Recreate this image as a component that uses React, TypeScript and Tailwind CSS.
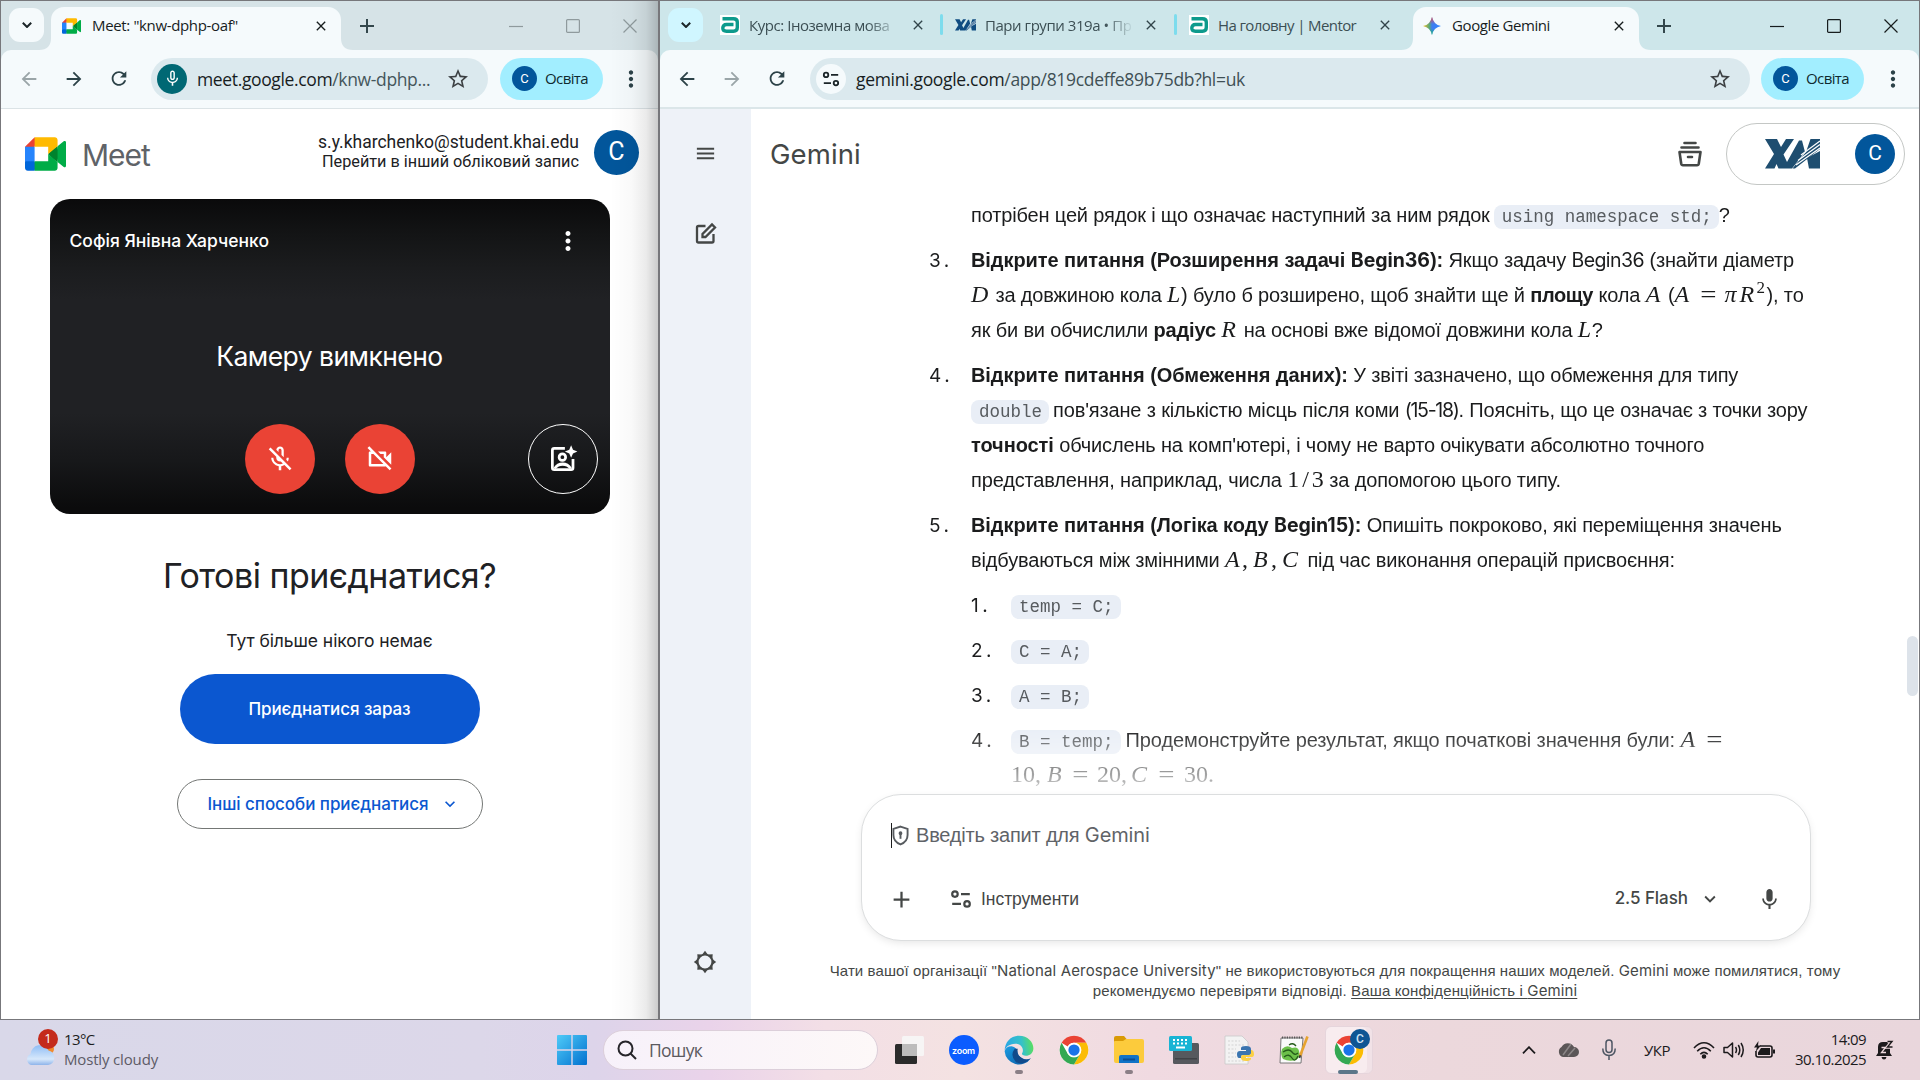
import type { ReactNode } from "react";
import {
  MdAdd,
  MdArrowBack,
  MdArrowForward,
  MdClose,
  MdKeyboardArrowDown,
  MdMenu,
  MdMic,
  MdMicNone,
  MdMoreVert,
  MdOutlineMicOff,
  MdOutlineVideocamOff,
  MdRefresh,
  MdStarBorder,
} from "react-icons/md";

/* ---------- logos and icons ---------- */

function MeetLogo({ className }: { className: string }) {
  return (
    <svg viewBox="0 0 87.5 72" className={className}>
      <path fill="#00832d" d="M49.5 36l8.53 9.75 11.47 7.33 2-17.02-2-16.64-11.69 6.44z" />
      <path fill="#0066da" d="M0 51.5V66c0 3.315 2.685 6 6 6h14.5l3-10.96-3-9.54-9.95-3z" />
      <path fill="#e94235" d="M20.5 0L0 20.5l10.55 3 9.95-3 2.95-9.41z" />
      <path fill="#2684fc" d="M20.5 20.5H0v31h20.5z" />
      <path
        fill="#00ac47"
        d="M82.6 8.68L69.5 19.42v33.66l13.16 10.79c1.97 1.54 4.85.135 4.85-2.37V11c0-2.535-2.945-3.925-4.91-2.32zM49.5 36v15.5h-29V72h43c3.315 0 6-2.685 6-6V53.08z"
      />
      <path fill="#ffba00" d="M63.5 0h-43v20.5h29V36l20-16.57V6c0-3.315-2.685-6-6-6z" />
    </svg>
  );
}

function XaiLogo({ className, color }: { className: string; color: string }) {
  return (
    <svg viewBox="0 0 55 30" className={className} fill={color}>
      <path d="M0 0H12L16 8 21 0H29L18.500 15.500 22 23 34 1.500H37L40 13 27 29.500H13.500L11.500 25 9.500 29.500H0L9 15z" />
      <path d="M55 12V29.500H44L42 19z" />
      <path d="M45.500 0H55V10L30 29.500H27.500L41 13z" />
      <path d="M55 2 36 16M55 5.500 33 21.500M55 9 31 26" stroke="#fff" strokeWidth="1.300" fill="none" />
    </svg>
  );
}

function MentorLogo() {
  return (
    <div className="flex h-5 w-5 shrink-0 items-center justify-center bg-white">
      <svg viewBox="0 0 18 16" className="h-4 w-[18px]" fill="none" stroke="#0d9a8c" strokeWidth="3.400">
        <path d="M1.500 1.800H12.500Q16.300 1.800 16.300 5V10.500Q16.300 14.200 12.500 14.200H5.500Q1.800 14.200 1.800 11Q1.800 7.500 5.500 7.500H12.500" />
      </svg>
    </div>
  );
}

function GeminiSpark() {
  return (
    <svg viewBox="0 0 18 18" className="h-[18px] w-[18px] shrink-0">
      <defs>
        <linearGradient id="sparkH" x1="0" x2="1">
          <stop offset="0" stopColor="#f9bf1c" />
          <stop offset=".35" stopColor="#58a878" />
          <stop offset=".5" stopColor="#3f7df0" />
          <stop offset="1" stopColor="#3186ff" />
        </linearGradient>
        <linearGradient id="sparkV" x1="0" x2="0" y1="0" y2="1">
          <stop offset="0" stopColor="#f0453a" />
          <stop offset=".4" stopColor="#e0506a" stopOpacity="0" />
          <stop offset=".65" stopColor="#0ebc5f" stopOpacity="0" />
          <stop offset="1" stopColor="#0ebc5f" />
        </linearGradient>
      </defs>
      <path fill="url(#sparkH)" d="M9 0Q10.500 7.500 18 9 10.500 10.500 9 18 7.500 10.500 0 9 7.500 7.500 9 0z" />
      <path fill="url(#sparkV)" d="M9 0Q10.500 7.500 18 9 10.500 10.500 9 18 7.500 10.500 0 9 7.500 7.500 9 0z" />
    </svg>
  );
}

function TuneIcon({ className }: { className: string }) {
  return (
    <svg viewBox="0 0 20 20" className={className} fill="none" stroke="currentColor" strokeWidth="2">
      <circle cx="4.500" cy="5.500" r="2.500" />
      <path d="M10 5.500H18M2 14.500H10" />
      <circle cx="15.500" cy="14.500" r="2.500" />
    </svg>
  );
}

function WindowControls({ className }: { className: string }) {
  return (
    <div className={`ml-auto flex ${className}`}>
      <div className="flex w-[57px] justify-center">
        <svg viewBox="0 0 14 14" className="h-3.5 w-3.5" stroke="currentColor">
          <path d="M0 7.500H14" strokeWidth="1.200" />
        </svg>
      </div>
      <div className="flex w-[57px] justify-center">
        <svg viewBox="0 0 14 14" className="h-3.5 w-3.5" fill="none" stroke="currentColor">
          <rect x=".6" y=".6" width="12.800" height="12.800" rx="1" strokeWidth="1.200" />
        </svg>
      </div>
      <div className="flex w-[57px] justify-center">
        <svg viewBox="0 0 14 14" className="h-3.5 w-3.5" fill="none" stroke="currentColor">
          <path d="M.5.5 13.500 13.500M13.500.5.5 13.500" strokeWidth="1.200" />
        </svg>
      </div>
    </div>
  );
}

/* ---------- browser chrome ---------- */

function TabSearch({ className }: { className: string }) {
  return (
    <div className={`ml-2 mt-[7px] flex h-[34px] w-[35px] shrink-0 items-center justify-center rounded-[11px] ${className}`}>
      <svg viewBox="0 0 10 6" className="h-1.5 w-2.5" fill="none" stroke="#1b2528" strokeWidth="2">
        <path d="M.8.8 5 5 9.200.8" />
      </svg>
    </div>
  );
}

function ActiveTab({ className, icon, title, titleClass }: { className: string; icon: ReactNode; title: string; titleClass: string }) {
  return (
    <div className={`relative mt-1.5 flex h-[43px] shrink-0 items-center rounded-t-[13px] bg-[#f5fafc] pb-1.5 pr-3 ${className}`}>
      <svg viewBox="0 0 12 12" className="absolute -left-3 bottom-0 h-3 w-3" fill="#f5fafc">
        <path d="M12 0V12H0Q12 12 12 0z" />
      </svg>
      <svg viewBox="0 0 12 12" className="absolute -right-3 bottom-0 h-3 w-3" fill="#f5fafc">
        <path d="M0 0V12H12Q0 12 0 0z" />
      </svg>
      {icon}
      <span className={`whitespace-nowrap text-[15px] text-[#171d1e] ${titleClass}`}>{title}</span>
      <MdClose className="ml-auto h-4 w-4 shrink-0 text-[#171d1e]" />
    </div>
  );
}

function IdleTab({ icon, title, className, fade = "" }: { icon: ReactNode; title: string; className: string; fade?: string }) {
  return (
    <div className={`flex h-[49px] shrink-0 items-center pb-px ${className}`}>
      {icon}
      <span className={`ml-[9px] whitespace-nowrap text-[15px] text-[#3c4f54] ${fade}`}>{title}</span>
      <MdClose className="ml-auto h-4 w-4 shrink-0 text-[#31444a]" />
    </div>
  );
}

function ProfilePill() {
  return (
    <div className="flex h-[42px] w-[103px] shrink-0 items-center rounded-full bg-[#a2eeff] pl-3">
      <div className="flex h-[25px] w-[25px] items-center justify-center rounded-full bg-[#02569b] font-['Roboto'] text-[13px] text-white">
        C
      </div>
      <span className="ml-2 text-[15px] tracking-[-0.6px] text-[#0f2a30]">Освіта</span>
    </div>
  );
}

/* ---------- Meet window ---------- */

function MeetWindow() {
  return (
    <div className="relative flex h-[1020px] w-[660px] shrink-0 flex-col border-b border-l border-r-2 border-t border-[#77777b] bg-white">
      <div className="flex h-[49px] shrink-0 bg-[#d6e3e7] font-['Open_Sans']">
        <TabSearch className="bg-[#f5fafc]" />
        <ActiveTab
          className="ml-[7px] w-[290px] pl-[11px]"
          icon={<MeetLogo className="h-4 w-[19px] shrink-0" />}
          title={'Meet: "knw-dphp-oaf"'}
          titleClass="ml-[11px] tracking-[-0.35px]"
        />
        <div className="ml-[14px] flex items-center">
          <MdAdd className="h-6 w-6 text-[#33474c]" />
        </div>
        <WindowControls className="items-center text-[#8f9a9d]" />
      </div>
      <div className="bg-[#d6e3e7]">
        <div className="flex h-[59px] items-center rounded-t-[10px] border-b border-[#dbe3e6] bg-[#f5fafc] pb-px pl-[17px] font-['Open_Sans'] text-[#2c4248]">
          <MdArrowBack className="h-[22px] w-[22px] shrink-0 text-[#9aa5a8]" />
          <MdArrowForward className="ml-[23px] h-[22px] w-[22px] shrink-0" />
          <MdRefresh className="ml-[23px] h-[23px] w-[22px] shrink-0" />
          <div className="ml-[21px] flex h-[42px] w-[337px] shrink-0 items-center rounded-full bg-[#dbe9ee] pl-1.5">
            <div className="flex h-[30px] w-[30px] shrink-0 items-center justify-center rounded-full bg-[#006874] text-white">
              <MdMicNone className="h-[19px] w-[19px]" />
            </div>
            <span className="ml-[10px] whitespace-nowrap pt-0.5 text-[17.5px] tracking-[-0.36px] text-[#171d1e]">
              meet.google.com<span className="text-[#45565b]">/knw-dphp...</span>
            </span>
            <MdStarBorder className="ml-auto mr-[18px] h-6 w-6 shrink-0 text-[#3c4043]" />
          </div>
          <div className="ml-3">
            <ProfilePill />
          </div>
          <MdMoreVert className="ml-[15px] h-[26px] w-[26px] shrink-0" />
        </div>
      </div>

      <div className="flex h-[90px] shrink-0 items-center pb-1 pl-6 pr-[19px]">
        <MeetLogo className="mt-1 h-[34px] w-[41px]" />
        <span className="ml-4 mt-[7px] font-['Inter'] text-[30px] tracking-[-1px] text-[#5f6368]">Meet</span>
        <div className="ml-auto text-right font-['Roboto'] text-[#202124]">
          <div className="text-[17.5px] leading-5">s.y.kharchenko@student.khai.edu</div>
          <div className="text-[16.25px] leading-5">Перейти в інший обліковий запис</div>
        </div>
        <div className="ml-[15px] flex h-[45px] w-[45px] items-center justify-center rounded-full bg-[#02569b] font-['Roboto'] text-[25px] text-white">
          C
        </div>
      </div>

      <div className="mx-auto flex h-[315px] w-[560px] shrink-0 flex-col rounded-[20px] bg-[linear-gradient(to_bottom,#0a0a0b_0%,#131415_11%,#1b1c1e_22%,#202124_32%,#202124_68%,#17181a_83%,#0b0b0c_98%)] text-white">
        <div className="flex h-[84px] items-center justify-between pl-5 pr-[27px]">
          <span className="pt-px font-['Inter'] text-[17.5px] font-medium">Софія Янівна Харченко</span>
          <MdMoreVert className="h-[30px] w-[30px]" />
        </div>
        <div className="flex h-[146px] items-center justify-center pt-px font-['Inter'] text-[26.5px] tracking-[-0.55px]">
          Камеру вимкнено
        </div>
        <div className="mt-[-5px] flex h-[70px]">
          <div className="ml-[195px] flex h-[70px] w-[70px] items-center justify-center rounded-full bg-[#ea4335]">
            <MdOutlineMicOff className="h-[30px] w-[30px]" />
          </div>
          <div className="ml-[30px] flex h-[70px] w-[70px] items-center justify-center rounded-full bg-[#ea4335]">
            <MdOutlineVideocamOff className="h-[30px] w-[30px]" />
          </div>
          <div className="ml-[113px] flex h-[70px] w-[70px] items-center justify-center rounded-full border border-white">
            <svg viewBox="0 0 24 24" className="h-[30px] w-[30px]" fill="none" stroke="white" strokeWidth="2.200">
              <path d="M13.500 3.500H5Q3.500 3.500 3.500 5V19Q3.500 20.500 5 20.500H18.500Q20 20.500 20 19V12" />
              <circle cx="11.500" cy="10.500" r="2.600" />
              <path fill="white" stroke="none" d="M4.500 19Q7 14.800 11.700 14.800T19 19L17.500 20Q15 17.300 11.700 17.300T6 20z" />
              <path fill="white" stroke="none" d="M18.500 1 20 4.500 23.500 6 20 7.500 18.500 11 17 7.500 13.500 6 17 4.500z" />
            </svg>
          </div>
        </div>
      </div>

      <div className="flex flex-col items-center font-['Inter'] text-[#202124]">
        <div className="mt-10 h-[44px] whitespace-nowrap text-[34px] leading-[44px] tracking-[-0.52px]">Готові приєднатися?</div>
        <div className="mt-[31px] h-6 text-[17.5px] leading-6 tracking-[-0.07px]">Тут більше нікого немає</div>
        <div className="mt-[21px] flex h-[70px] w-[300px] items-center justify-center rounded-full bg-[#0b57d0] pt-0.5 text-[17px] font-medium tracking-[-0.08px] text-white">
          Приєднатися зараз
        </div>
        <div className="mt-[35px] flex h-[50px] w-[306px] items-center rounded-full border border-[#747775] pl-[30px] text-[17px] font-medium tracking-[-0.06px] text-[#0b57d0]">
          <span className="pt-0.5">Інші способи приєднатися</span>
          <MdKeyboardArrowDown className="ml-[11px] h-5 w-5" />
        </div>
      </div>

      <div className="pointer-events-none absolute bottom-0 right-0 top-0 w-12 bg-[linear-gradient(to_right,transparent,rgba(0,0,0,0.025)_45%,rgba(0,0,0,0.08)_75%,rgba(0,0,0,0.2))]" />
    </div>
  );
}

/* ---------- Gemini window ---------- */

function Code({ children, className = "" }: { children: ReactNode; className?: string }) {
  return (
    <code
      className={`inline-block h-6 rounded-lg bg-[#e9eef6] pl-2 pr-[7px] font-['Liberation_Mono'] text-[17.5px] leading-6 tracking-normal text-[#575b5f] ${className}`}
    >
      {children}
    </code>
  );
}

function M({ children, className = "" }: { children: ReactNode; className?: string }) {
  return (
    <span className={`inline-block font-['Liberation_Serif'] text-[24px] leading-none tracking-normal ${className}`}>
      {children}
    </span>
  );
}

function Eq({ className = "mx-[7px]" }: { className?: string }) {
  return (
    <span className={`inline-block w-[17px] scale-x-120 text-center font-['Liberation_Serif'] text-[24px] leading-none tracking-normal ${className}`}>
      =
    </span>
  );
}

function Latin({ children, className = "tracking-[-0.55px]" }: { children: ReactNode; className?: string }) {
  return <span className={`font-['Inter'] text-[19.5px] leading-none ${className}`}>{children}</span>;
}

function Bold({ children }: { children: ReactNode }) {
  return <b className="tracking-[-0.07px]">{children}</b>;
}

function Line({ children }: { children: ReactNode }) {
  return <div className="h-[35px] whitespace-pre">{children}</div>;
}

function Item({ n, children, className = "w-[42px]" }: { n: string; children: ReactNode; className?: string }) {
  return (
    <li className="flex">
      <span className={`shrink-0 font-['Inter'] text-[19px] tracking-[3.5px] ${className}`}>{n}.</span>
      <div>{children}</div>
    </li>
  );
}

function Answer() {
  return (
    <div className="h-[596px] shrink-0 overflow-hidden pl-[178px] font-['Liberation_Sans'] text-[20px] leading-[35px] tracking-[-0.155px] text-[#1b1c1d] [mask-image:linear-gradient(to_bottom,black_528px,transparent_610px)]">
      <ol className="flex flex-col gap-2.5">
        <li className="pl-[42px]">
          <Line>
            потрібен цей рядок і що означає наступний за ним рядок<Code className="ml-1">using namespace std;</Code>?
          </Line>
        </li>
        <Item n="3">
          <Line>
            <Bold>
              Відкрите питання (Розширення задачі <Latin className="tracking-[-0.05px]">Begin36</Latin>):
            </Bold>{" "}
            Якщо задачу <Latin>Begin36</Latin> (знайти діаметр
          </Line>
          <Line>
            <M className="w-[19px] italic">D</M>
            {" за довжиною кола "}
            <M className="w-[14px] italic">L</M>
            {") було б розширено, щоб знайти ще й "}
            <b className="tracking-[-0.4px]">площу</b>
            {" кола "}
            <M className="w-[17px] italic">A</M>
            {" ("}
            <M className="w-[17px] italic">A</M>
            <Eq className="mx-2" />
            <M className="w-[15px] italic">π</M>
            <M className="w-[17px] italic">R</M>
            <span className="inline-block w-[10px] align-[9px] font-['Liberation_Serif'] text-[17px] leading-none">2</span>
            {"), то"}
          </Line>
          <Line>
            {"як би ви обчислили "}
            <b>радіус</b> <M className="w-[17px] italic">R</M>
            {" на основі вже відомої довжини кола "}
            <M className="w-[14px] italic">L</M>?
          </Line>
        </Item>
        <Item n="4">
          <Line>
            <Bold>Відкрите питання (Обмеження даних):</Bold> У звіті зазначено, що обмеження для типу
          </Line>
          <Line>
            <Code className="mr-1">double</Code>
            {"пов'язане з кількістю місць після коми "}
            <Latin className="tracking-[-1.3px]">(15-18)</Latin>
            {". Поясніть, що це означає з точки зору"}
          </Line>
          <Line>
            <Bold>точності</Bold>
            {" обчислень на комп'ютері, і чому не варто очікувати абсолютно точного"}
          </Line>
          <Line>
            {"представлення, наприклад, числа "}
            <M>
              1<span className="mx-[3px]">/</span>3
            </M>
            {" за допомогою цього типу."}
          </Line>
        </Item>
        <Item n="5">
          <Line>
            <Bold>
              Відкрите питання (Логіка коду <Latin className="tracking-[-0.05px]">Begin15</Latin>):
            </Bold>{" "}
            <span className="tracking-[-0.13px]">Опишіть покроково, які переміщення значень</span>
          </Line>
          <Line>
            {"відбуваються між змінними "}
            <M className="w-[77px] whitespace-pre">
              <i className="inline-block w-[17px]">A</i>
              <span className="inline-block w-[11px]">,</span>
              <i className="inline-block w-[18px]">B</i>
              <span className="inline-block w-[11px]">,</span>
              <i>C</i>
            </M>
            {" під час виконання операцій присвоєння:"}
          </Line>
          <ol className="mt-2.5 flex flex-col gap-2.5">
            <Item n="1" className="w-[40px]">
              <Line>
                <Code>temp = C;</Code>
              </Line>
            </Item>
            <Item n="2" className="w-[40px]">
              <Line>
                <Code>C = A;</Code>
              </Line>
            </Item>
            <Item n="3" className="w-[40px]">
              <Line>
                <Code>A = B;</Code>
              </Line>
            </Item>
            <Item n="4" className="w-[40px]">
              <Line>
                <Code className="mr-[5px]">B = temp;</Code>
                <span className="tracking-[-0.1px]">{"Продемонструйте результат, якщо початкові значення були: "}</span>
                <M className="w-[17px] italic">A</M>
                <Eq className="ml-2" />
              </Line>
              <Line>
                <M className="w-[36px]">10,</M>
                <M className="w-[17px] italic">B</M>
                <Eq className="mx-[8px]" />
                <M className="w-[34px]">20,</M>
                <M className="w-[18px] italic">C</M>
                <Eq className="mx-[9px]" />
                <M>30.</M>
              </Line>
            </Item>
          </ol>
        </Item>
      </ol>
    </div>
  );
}

function GeminiWindow() {
  return (
    <div className="flex h-[1020px] w-[1260px] shrink-0 flex-col border-b border-r border-t border-[#77777b] bg-white">
      <div className="flex h-[49px] shrink-0 bg-[#cde6ea] font-['Open_Sans']">
        <TabSearch className="bg-[#d0f6ff]" />
        <IdleTab
          className="ml-[17px] w-[206px] tracking-[-0.45px]"
          icon={<MentorLogo />}
          title="Курс: Іноземна мова"
          fade="[mask-image:linear-gradient(to_right,black_84%,rgba(0,0,0,0.35))]"
        />
        <div className="ml-3.5 mt-[13px] h-[21px] w-[3px] rounded bg-[#7ddced]" />
        <IdleTab
          className="ml-3 w-[204px] tracking-[-0.45px]"
          icon={<XaiLogo className="h-3 w-[21px] shrink-0" color="#0f4c81" />}
          title="Пари групи 319а • Пр"
          fade="[mask-image:linear-gradient(to_right,black_82%,rgba(0,0,0,0.1))]"
        />
        <div className="ml-[15px] mt-[13px] h-[21px] w-[3px] rounded bg-[#7ddced]" />
        <IdleTab className="ml-3 w-[204px] tracking-[-0.61px]" icon={<MentorLogo />} title="На головну | Mentor" />
        <ActiveTab className="ml-5 w-[226px] pl-[10px]" icon={<GeminiSpark />} title="Google Gemini" titleClass="ml-[11px] tracking-[-0.4px]" />
        <div className="ml-[13px] flex items-center">
          <MdAdd className="h-6 w-6 text-[#33474c]" />
        </div>
        <WindowControls className="items-center text-[#171d1e]" />
      </div>
      <div className="bg-[#cde6ea]">
        <div className="flex h-[59px] items-center rounded-t-[10px] border-b-2 border-[#dbe6e9] bg-[#f5fafc] pl-4 font-['Open_Sans'] text-[#2c4248]">
          <MdArrowBack className="h-[22px] w-[22px] shrink-0" />
          <MdArrowForward className="ml-[23px] h-[22px] w-[22px] shrink-0 text-[#9aa5a8]" />
          <MdRefresh className="ml-[23px] h-[23px] w-[22px] shrink-0" />
          <div className="ml-[22px] flex h-[42px] w-[940px] shrink-0 items-center rounded-full bg-[#dbe9ee] pl-[6px]">
            <div className="flex h-[30px] w-[30px] items-center justify-center rounded-full bg-[#f5fafc] text-[#1b2528]">
              <TuneIcon className="h-[18px] w-[18px]" />
            </div>
            <span className="ml-[10px] pt-0.5 text-[17.5px] tracking-[-0.32px] text-[#171d1e]">
              gemini.google.com<span className="text-[#3f5055]">/app/819cdeffe89b75db?hl=uk</span>
            </span>
            <MdStarBorder className="ml-auto mr-[18px] h-6 w-6 text-[#3c4043]" />
          </div>
          <div className="ml-[11px]">
            <ProfilePill />
          </div>
          <MdMoreVert className="ml-[16px] h-[26px] w-[26px] shrink-0" />
        </div>
      </div>

      <div className="flex flex-1">
        <nav className="flex w-[91px] shrink-0 flex-col items-center bg-[#eef2f8] pr-px pt-[33px] text-[#444746]">
          <MdMenu className="h-[23px] w-[23px]" />
          <svg viewBox="0 0 24 24" className="mt-[57px] h-6 w-6" fill="none" stroke="currentColor" strokeWidth="2.300">
            <path d="M12.500 4H5.500Q4 4 4 5.500V19Q4 20.500 5.500 20.500H19Q20.500 20.500 20.500 19V12" />
            <path d="M9.500 15V12L19 2.500 22 5.500 12.500 15z" />
          </svg>
          <svg viewBox="0 0 24 24" className="mt-auto mb-[45px] h-6 w-6" fill="none" stroke="currentColor" strokeWidth="2">
            <circle cx="12" cy="12" r="7.500" strokeWidth="2.200" />
            <path
              fill="currentColor"
              stroke="none"
              d="M12 .8 14.800 4.500H9.200zM12 23.200 9.200 19.500H14.800zM.8 12 4.500 9.200V14.800zM23.200 12 19.500 14.800V9.200zM4.300 4.300 8.500 4.600 4.600 8.500zM19.700 4.300 19.400 8.500 15.500 4.600zM4.300 19.700 4.600 15.500 8.500 19.400zM19.700 19.700 15.500 19.400 19.400 15.500z"
            />
          </svg>
        </nav>

        <main className="relative flex w-[1168px] flex-col">
          <header className="flex h-[89px] shrink-0 items-center pl-[19px] pr-[14px]">
            <span className="pt-0.5 font-['Inter'] text-[27.5px] tracking-[0.1px] text-[#444746]">Gemini</span>
            <svg viewBox="0 0 24 26" className="ml-auto h-[26px] w-6" fill="none" stroke="#444746" strokeWidth="2.600" strokeLinecap="round">
              <path d="M6.500 2H17.500M3.500 6.500H20.500M10 16H14" />
              <path d="M1.500 11H22.500L20.800 22.500Q20.500 24.200 19 24.200H5Q3.500 24.200 3.200 22.500z" strokeLinejoin="round" />
            </svg>
            <div className="ml-6 flex h-[62px] w-[179px] items-center rounded-full border border-[#c4c7c5] pl-[38px]">
              <XaiLogo className="h-[30px] w-[55px]" color="#1f4e70" />
              <div className="ml-[35px] flex h-10 w-10 items-center justify-center rounded-full bg-[#02569b] font-['Roboto'] text-[21px] text-white">
                C
              </div>
            </div>
          </header>

          <Answer />

          <div className="ml-[110px] flex h-[147px] w-[950px] shrink-0 flex-col rounded-[40px] border border-[#dcdedf] bg-white shadow-[0_3px_10px_-2px_rgba(0,0,0,0.12)]">
            <div className="flex h-20 items-center pl-[29px] text-[20px] text-[#5f6368]">
              <div className="h-[25px] w-px bg-[#1b1c1d]" />
              <svg viewBox="0 0 18 22" className="h-[21px] w-[17px]" fill="none" stroke="#575b5f" strokeWidth="2">
                <path d="M9 1.500 16.500 4V10.500Q16.500 17.500 9 20.500 1.500 17.500 1.500 10.500V4z" />
                <path d="M9 9V14.500" />
                <circle cx="9" cy="8.500" r="1" />
              </svg>
              <span className="ml-[7px] whitespace-pre font-['Liberation_Sans'] tracking-[-0.2px]">
                Введіть запит для <span className="font-['Inter'] tracking-[-0.1px]">Gemini</span>
              </span>
            </div>
            <div className="flex h-12 items-center pl-[26px] pr-[28px] text-[#444746]">
              <MdAdd className="h-[27px] w-[27px]" />
              <TuneIcon className="ml-[35px] h-[22px] w-[22px]" />
              <span className="ml-[9px] font-['Liberation_Sans'] text-[17.5px] tracking-[-0.05px]">Інструменти</span>
              <span className="ml-auto font-['Inter'] text-[17px] font-medium tracking-[-0.05px]">2.5 Flash</span>
              <MdKeyboardArrowDown className="ml-[11px] h-[22px] w-[22px]" />
              <MdMic className="ml-[36px] h-[25px] w-[25px]" />
            </div>
          </div>

          <footer className="mt-5 text-center font-['Liberation_Sans'] text-[15px] leading-5 tracking-[0.1px] text-[#444746]">
            <div className="whitespace-nowrap">
              Чати вашої організації "<span className="font-['Inter'] tracking-[0.15px]">National Aerospace University</span>" не
              використовуються для покращення наших моделей. <span className="font-['Inter']">Gemini</span> може помилятися, тому
            </div>
            <div className="whitespace-nowrap tracking-[0.13px]">
              рекомендуємо перевіряти відповіді.{" "}
              <span className="underline underline-offset-2">
                Ваша конфіденційність і <span className="font-['Inter']">Gemini</span>
              </span>
            </div>
          </footer>

          <div className="absolute right-px top-[527px] h-[60px] w-[11px] rounded-full bg-[#dde3ea]" />
        </main>
      </div>
    </div>
  );
}

/* ---------- taskbar ---------- */

function ChromeLogo() {
  return (
    <svg viewBox="0 0 48 48" className="h-[30px] w-[30px]">
      <circle cx="24" cy="24" r="23" fill="#fff" />
      <path fill="#ea4335" d="M24 1A23 23 0 0 1 43.900 12.500H24A11.500 11.500 0 0 0 14 18.200L4.100 12.500A23 23 0 0 1 24 1z" />
      <path fill="#fbbc04" d="M43.900 12.500A23 23 0 0 1 24 47L34 29.800A11.500 11.500 0 0 0 24 12.500z" />
      <path fill="#34a853" d="M24 47A23 23 0 0 1 4.100 12.500L14 29.800A11.500 11.500 0 0 0 34 29.800z" />
      <circle cx="24" cy="24" r="11.500" fill="#fff" />
      <circle cx="24" cy="24" r="9" fill="#1a73e8" />
    </svg>
  );
}

function EdgeLogo() {
  return (
    <svg viewBox="0 0 48 48" className="h-[30px] w-[30px]">
      <defs>
        <linearGradient id="edgeTop" x1="0" x2="1" y1=".5" y2=".4">
          <stop offset="0" stopColor="#2aa6e6" />
          <stop offset=".6" stopColor="#35c1c9" />
          <stop offset="1" stopColor="#5be05a" />
        </linearGradient>
        <linearGradient id="edgeBody" x1="0" x2="1" y1="0" y2="1">
          <stop offset="0" stopColor="#1b9de2" />
          <stop offset="1" stopColor="#0c59a4" />
        </linearGradient>
      </defs>
      <path fill="url(#edgeBody)" d="M1 26A23 23 0 0 0 43 37Q36 41 29 37 21 33 21 26 21 20 12 18 3 18 1 26z" />
      <path fill="url(#edgeTop)" d="M1 26C1 10 12 1 24 1C38 1 47 11 47 21C47 29 41 33 35 33 30 33 28 31 29 29 32 25 30 14 18 14 8 14 2 20 1 26z" />
      <path fill="#114a8b" d="M17 22Q9 33 19 43 29 50 43 37 36 41 29 37 20 32 22 22z" />
    </svg>
  );
}

function TaskIcon({ children, dot = false }: { children: ReactNode; dot?: boolean }) {
  return (
    <div className="relative flex h-[60px] w-[55px] shrink-0 items-center justify-center">
      {children}
      {dot && <div className="absolute bottom-[6px] left-[24px] h-1 w-2 rounded-full bg-[#8b7f86]" />}
    </div>
  );
}

function Taskbar() {
  return (
    <div className="flex h-[60px] items-center bg-[linear-gradient(to_right,#d9d8e9_0%,#dcd7e9_25%,#ddd4ea_31%,#ead3ea_37%,#f3dfe6_43%,#f4e2e2_50%,#f0dae1_60%,#ecd8dc_75%,#e9d6dc_100%)] pl-[25px] font-['Open_Sans']">
      <div className="flex w-[532px] items-center">
        <div className="relative h-9 w-[34px]">
          <svg viewBox="0 0 34 36" className="h-9 w-[34px]">
            <defs>
              <linearGradient id="cloud" x1="0" x2="0" y1="0" y2="1">
                <stop offset="0" stopColor="#8fbdf5" />
                <stop offset=".7" stopColor="#d7e8fb" />
                <stop offset="1" stopColor="#8eb4ea" />
              </linearGradient>
            </defs>
            <circle cx="24" cy="17" r="5" fill="#f28a2c" />
            <path fill="url(#cloud)" d="M6 33A6 6 0 0 1 5.500 22A9.500 9.500 0 0 1 23.500 18.500A7.400 7.400 0 0 1 23 33z" />
          </svg>
          <div className="absolute -top-[3px] left-[13px] flex h-5 w-5 items-center justify-center rounded-full bg-[#c42b1c] text-[13px] text-white">
            1
          </div>
        </div>
        <div className="ml-[5px] pb-0.5 text-[15px] leading-5">
          <div className="tracking-[-0.6px] text-[#1c1c20]">13°C</div>
          <div className="tracking-[-0.16px] text-[#5d5b66]">Mostly cloudy</div>
        </div>
      </div>

      <svg viewBox="0 0 30 30" className="h-[30px] w-[30px]">
        <defs>
          <linearGradient id="win" x1="0" x2="1" y1="0" y2="1">
            <stop offset="0" stopColor="#4fcbf8" />
            <stop offset="1" stopColor="#0271cf" />
          </linearGradient>
        </defs>
        <path fill="url(#win)" d="M1 0H14.300V14.300H0V1Q0 0 1 0zM15.700 0H29Q30 0 30 1V14.300H15.700zM0 15.700H14.300V30H1Q0 30 0 29zM15.700 15.700H30V29Q30 30 29 30H15.700z" />
      </svg>

      <div className="ml-4 flex h-10 w-[275px] items-center rounded-full border border-[#dccfda] bg-[linear-gradient(to_right,#f7f1fa,#fdf8f8)] pl-[13px]">
        <svg viewBox="0 0 20 20" className="h-5 w-5" fill="none" stroke="#26252a" strokeWidth="2">
          <circle cx="8.500" cy="8.500" r="7" />
          <path d="M13.500 13.500 19 19" />
        </svg>
        <span className="ml-[12px] text-[17.5px] tracking-[-0.7px] text-[#5c5a5f]">Пошук</span>
      </div>

      <div className="ml-[3px] flex">
        <TaskIcon>
          <svg viewBox="0 0 30 30" className="h-[30px] w-[30px]">
            <rect x="1" y="9" width="22" height="20" rx="1.500" fill="#2b2b2b" />
            <rect x="8" y="1" width="22" height="20" rx="1.500" fill="#f7f5f5" />
            <rect x="8" y="9" width="15" height="12" fill="#bdbcbc" />
          </svg>
        </TaskIcon>
        <TaskIcon>
          <div className="flex h-[30px] w-[30px] items-center justify-center rounded-full bg-[#0b5cff] font-['Inter'] text-[9px] font-semibold leading-none tracking-[-0.3px] text-white">
            zoom
          </div>
        </TaskIcon>
        <TaskIcon dot>
          <EdgeLogo />
        </TaskIcon>
        <TaskIcon>
          <ChromeLogo />
        </TaskIcon>
        <TaskIcon dot>
          <svg viewBox="0 0 30 28" className="h-7 w-[30px]">
            <path fill="#d99a06" d="M0 2Q0 0 2 0H10L13 3.500V9H0z" />
            <path fill="#fccb3c" d="M0 6Q0 5 1 5H9L12 3H28Q30 3 30 5V25Q30 27 28 27H2Q0 27 0 25z" />
            <path fill="#1173c7" d="M5 27V21Q5 19 7 19H23Q25 19 25 21V27z" />
            <path fill="#0a4f94" d="M9 22.500H21V24.500H9z" />
          </svg>
        </TaskIcon>
        <TaskIcon>
          <svg viewBox="0 0 30 28" className="h-7 w-[30px]">
            <rect x="4" y="7" width="26" height="21" rx="1.500" fill="#56595e" />
            <rect x="6" y="22" width="22" height="1.500" fill="#3f4246" />
            <rect x="0" y="0" width="23" height="15" rx="1.500" fill="#19b4d4" />
            <path stroke="#fff" strokeWidth="2" strokeDasharray="2 2" d="M4 4H20M4 7.500H20" />
            <path stroke="#fff" strokeWidth="2" d="M7 11.500H16" />
          </svg>
        </TaskIcon>
        <TaskIcon>
          <svg viewBox="0 0 30 30" className="h-[30px] w-[30px]">
            <path fill="#f3f3f3" stroke="#c9c9c9" strokeWidth=".8" d="M1 1H18L24 7V29H1z" />
            <path stroke="#d3d3d3" strokeWidth="1" strokeDasharray="2 1.500" d="M4 6H16M4 10H20M4 14H12M4 18H12M4 22H12M4 26H20" />
            <path fill="#3a75b0" d="M22 11Q27 11 27 14V18Q27 20 24 20H19Q17 20 17 22V23H15Q13 23 13 19 13 16 16 16H22V15H17V13Q17 11 22 11z" />
            <path fill="#fbd043" d="M22 26Q17 26 17 23V22Q17 20 19 20H24Q27 20 27 18V15H28Q30 16 30 19 30 22 28 22H22V23H27V24Q26 26 22 26z" />
          </svg>
        </TaskIcon>
        <TaskIcon>
          <svg viewBox="0 0 30 30" className="h-[30px] w-[30px]">
            <path fill="#fafafa" stroke="#6b6b6b" strokeWidth=".9" d="M2 3H24L22 28H1z" />
            <path stroke="#555" strokeWidth="2" strokeDasharray="1.200 1.200" d="M3 2.500H24" />
            <path fill="#6cc04a" d="M3 14Q8 9 13 13 19 11 20 16 22 22 17 25 10 27 4 24 1 19 3 14z" />
            <path fill="none" stroke="#255c1a" strokeWidth="1.300" d="M4 17Q10 13 13 17T19 18M5 22Q10 18 13 23T19 21M10 10Q14 7 17 11" />
            <path stroke="#e6a32e" strokeWidth="2.600" d="M28.500 1.500 21 21" />
            <path stroke="#333" strokeWidth="1.800" d="M21.300 20.300 20.500 23" />
          </svg>
        </TaskIcon>
        <div className="relative flex h-[60px] w-[55px] items-center justify-center">
          <div className="flex h-12 w-12 items-center rounded-md border border-[#e6d5dc] bg-[#f8ecef] pl-2 shadow-[inset_-5px_0_0_#f1e2e7]">
            <ChromeLogo />
          </div>
          <div className="absolute left-[29px] top-[9px] flex h-5 w-5 items-center justify-center rounded-full bg-[#0e5594] font-['Roboto'] text-[12px] font-medium text-[#cfe3f5]">
            C
          </div>
          <div className="absolute bottom-[6px] left-[17px] h-1 w-5 rounded-full bg-[#5b7689]" />
        </div>
      </div>

      <div className="ml-[143px] flex items-center text-[#1c1a1c]">
        <svg viewBox="0 0 14 8" className="mx-[3px] h-2 w-3.5" fill="none" stroke="currentColor" strokeWidth="1.800">
          <path d="M1 7.300 7 1.200 13 7.300" />
        </svg>
        <svg viewBox="0 0 22 16" className="ml-[18px] h-4 w-[22px]">
          <path fill="#5b5657" d="M6 15A5.500 5.500 0 0 1 4.500 5 7 7 0 0 1 17 5 5 5 0 0 1 17 15z" />
          <path stroke="#8c8788" strokeWidth="1.500" d="M6 13 14 2M11 14 18 6" />
        </svg>
        <svg viewBox="0 0 16 22" className="ml-[22px] h-[22px] w-4" fill="none" stroke="#4d5663" strokeWidth="1.500">
          <rect x="5" y="1" width="6" height="12.500" rx="3" />
          <path d="M1.800 9.500Q1.800 16.500 8 16.500T14.200 9.500M8 16.500V21" />
        </svg>
        <span className="ml-[27px] w-[49px] text-[15px] tracking-[-0.5px]">УКР</span>
        <svg viewBox="0 0 22 18" className="h-[18px] w-[22px]" fill="none" stroke="currentColor" strokeWidth="1.600">
          <path d="M1 7Q11-3.500 21 7M4.200 10.200Q11 3.200 17.800 10.200M7.300 13.200Q11 9.500 14.700 13.200" />
          <circle cx="11" cy="15.500" r="1.500" fill="currentColor" />
        </svg>
        <svg viewBox="0 0 22 18" className="ml-2 h-[18px] w-[22px]" fill="none" stroke="currentColor" strokeWidth="1.500">
          <path d="M1 6.500H4.500L9.500 2V16L4.500 11.500H1z" strokeLinejoin="round" />
          <path d="M12.500 6Q14.500 9 12.500 12M15.300 4Q18.300 9 15.300 14M18 2Q22.500 9 18 16" />
        </svg>
        <svg viewBox="0 0 22 20" className="ml-2 h-5 w-[22px]">
          <path fill="none" stroke="currentColor" strokeWidth="1.600" d="M7 6H17Q19 6 19 8V15Q19 17 17 17H5Q3 17 3 15V11" />
          <path fill="currentColor" d="M8 8H17V15H5V12.500zM20 9.500H22V13.500H20zM5.500 1 1 7.500H4L2.500 12 8 5.500H5z" />
        </svg>
        <div className="w-[91px] pb-0.5 text-right text-[15px] leading-5">
          <div className="tracking-[-0.62px]">14:09</div>
          <div className="tracking-[-0.55px]">30.10.2025</div>
        </div>
        <div className="relative ml-[9px] h-5 w-[19px]">
          <svg viewBox="0 0 19 20" className="h-5 w-[19px]" fill="currentColor">
            <path d="M1 16 3 13V7Q3 2 8 2H15V13L17 16zM6.500 17H11.500Q11 19.500 9 19.500T6.500 17z" />
            <path fill="none" stroke="#ecd8dc" strokeWidth="1.300" d="M6.500 7.500H10.500L6.500 12.500H11" />
            <path fill="none" stroke="#ecd8dc" strokeWidth="3.500" d="M12.500 1.500H17L12.500 7H17.500" />
            <path fill="none" stroke="currentColor" strokeWidth="1.400" d="M12.500 1.500H17L12.500 7H17.500" />
          </svg>
        </div>
      </div>
    </div>
  );
}

export default function App() {
  return (
    <div className="h-[1080px] w-[1920px] overflow-hidden">
      <div className="flex">
        <MeetWindow />
        <GeminiWindow />
      </div>
      <Taskbar />
    </div>
  );
}
